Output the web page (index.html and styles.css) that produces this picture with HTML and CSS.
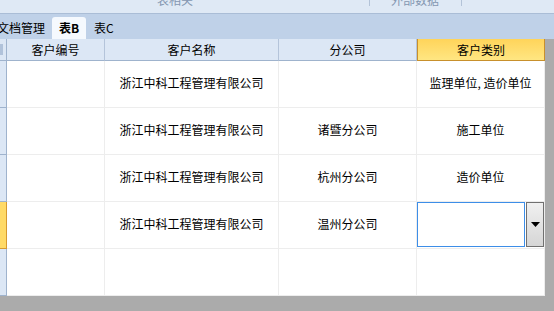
FILE: index.html
```html
<!DOCTYPE html>
<html lang="zh">
<head>
<meta charset="utf-8">
<title>表B</title>
<link rel="stylesheet" href="styles.css">
</head>
<body>
<div class="ribbon">
	<span class="group g1">表相关</span>
	<span class="sep s1"></span>
	<span class="group g2">外部数据</span>
	<span class="sep s2"></span>
</div>
<div class="tabs">
	<span class="tab first">文档管理</span>
	<span class="tab active">表B</span>
	<span class="tab">表C</span>
</div>
<div class="grid">
	<div class="row head">
		<div class="sel"><i></i></div>
		<div class="cell">客户编号</div>
		<div class="cell">客户名称</div>
		<div class="cell">分公司</div>
		<div class="cell hot">客户类别</div>
	</div>
	<div class="row">
		<div class="sel"></div>
		<div class="cell"></div>
		<div class="cell">浙江中科工程管理有限公司</div>
		<div class="cell"></div>
		<div class="cell">监理单位, 造价单位</div>
	</div>
	<div class="row">
		<div class="sel"></div>
		<div class="cell"></div>
		<div class="cell">浙江中科工程管理有限公司</div>
		<div class="cell">诸暨分公司</div>
		<div class="cell">施工单位</div>
	</div>
	<div class="row">
		<div class="sel"></div>
		<div class="cell"></div>
		<div class="cell">浙江中科工程管理有限公司</div>
		<div class="cell">杭州分公司</div>
		<div class="cell">造价单位</div>
	</div>
	<div class="row current">
		<div class="sel"></div>
		<div class="cell"></div>
		<div class="cell">浙江中科工程管理有限公司</div>
		<div class="cell">温州分公司</div>
		<div class="cell edit">
			<span class="box"></span>
			<span class="drop"><svg width="9" height="5" viewBox="0 0 9 5"><path d="M0 0H9L4.5 5Z" fill="#000"/></svg></span>
		</div>
	</div>
	<div class="row">
		<div class="sel"></div>
		<div class="cell"></div>
		<div class="cell"></div>
		<div class="cell"></div>
		<div class="cell"></div>
	</div>
</div>
</body>
</html>
```

FILE: styles.css
```css
html, body {
	margin: 0;
	padding: 0;
}

body {
	width: 554px;
	height: 311px;
	overflow: hidden;
	background-color: #ababab;
	font-family: "Noto Sans CJK SC", "Liberation Sans", sans-serif;
	font-size: 12px;
	color: #000;
}

.ribbon {
	position: relative;
	height: 13px;
	background-color: #dfe9f5;
	border-bottom: 1px solid #aabdd6;
	overflow: hidden;
}

.group {
	position: absolute;
	top: -8px;
	line-height: 16px;
	color: #8497b1;
}

.g1 {
	left: 157px;
}

.g2 {
	left: 391px;
}

.sep {
	position: absolute;
	top: 0;
	width: 1px;
	height: 6px;
	background-color: #b3c3d8;
}

.s1 {
	left: 369px;
}

.s2 {
	left: 461px;
}

.tabs {
	display: flex;
	align-items: flex-end;
	height: 25px;
	background-color: #bfd1e8;
}

.tab {
	height: 22px;
	line-height: 21px;
	padding: 0 6px 0 8px;
}

.tab.first {
	margin-left: -3px;
	padding-right: 7px;
	padding-left: 0;
}

.tab.active {
	width: 34px;
	padding: 0;
	text-align: center;
	font-weight: bold;
	background-color: #f5f9fe;
	border-radius: 3px 3px 0 0;
}

.grid {
	width: 545px;
	background-color: #fff;
}

.row {
	display: grid;
	grid-template-columns: 7px 98px 174px 138px 128px;
	height: 47px;
}

.cell {
	display: flex;
	align-items: center;
	justify-content: center;
	border-right: 1px solid #ededed;
	border-bottom: 1px solid #ededed;
	padding-bottom: 3px;
	white-space: nowrap;
}

.sel {
	background-color: #dce7f5;
	border-right: 1px solid #9fb3cd;
	border-bottom: 1px solid #9fb3cd;
}

.head {
	height: 22px;
	background-color: #dce7f5;
}

.head .cell {
	border-right: 1px solid #b4c4da;
	border-bottom: 1px solid #9fb3cd;
	padding-bottom: 1px;
}

.head .sel {
	position: relative;
}

.head .sel i {
	position: absolute;
	left: 0;
	top: 5px;
	width: 3px;
	height: 11px;
	background-color: #b0c2da;
}

.head .hot {
	background: linear-gradient(#ffd45a, #ffe682);
	border: 1px solid #c8902c;
	border-top: 0;
}

.current .sel {
	background-color: #ffda66;
	border: 1px solid #d69a30;
	border-left: 0;
	border-top: 0;
}

.edit {
	justify-content: flex-start;
	align-items: stretch;
	padding-bottom: 1px;
}

.box {
	flex: 1;
	border: 1px solid #3d8ee8;
}

.drop {
	display: flex;
	align-items: center;
	justify-content: center;
	width: 16px;
	border: 1px solid #707070;
	background: linear-gradient(#f0f0f0, #d6d6d6);
	margin-left: 1px;
}
```
